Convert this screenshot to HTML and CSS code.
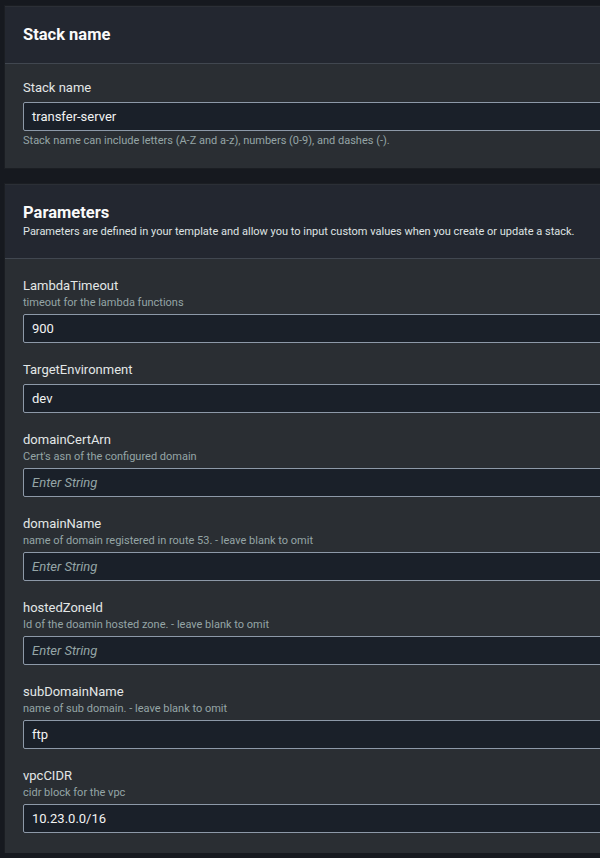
FILE: index.html
```html
<!DOCTYPE html>
<html lang="en">
<head>
<meta charset="utf-8">
<title>Specify stack details</title>
<link rel="stylesheet" href="styles.css">
</head>
<body>
<main class="page">
  <section class="panel">
    <header class="panel-header">
      <h2 class="panel-title">Stack name</h2>
    </header>
    <div class="panel-body panel-body--stack">
      <div class="field">
        <label class="field-label">Stack name</label>
        <div class="input"><span class="input-value">transfer-server</span></div>
        <p class="field-hint">Stack name can include letters (A-Z and a-z), numbers (0-9), and dashes (-).</p>
      </div>
    </div>
  </section>

  <section class="panel">
    <header class="panel-header">
      <h2 class="panel-title">Parameters</h2>
      <p class="panel-desc">Parameters are defined in your template and allow you to input custom values when you create or update a stack.</p>
    </header>
    <div class="panel-body panel-body--params">
      <div class="field">
        <label class="field-label">LambdaTimeout</label>
        <p class="field-desc">timeout for the lambda functions</p>
        <div class="input"><span class="input-value">900</span></div>
      </div>
      <div class="field">
        <label class="field-label">TargetEnvironment</label>
        <div class="input"><span class="input-value">dev</span></div>
      </div>
      <div class="field">
        <label class="field-label">domainCertArn</label>
        <p class="field-desc">Cert's asn of the configured domain</p>
        <div class="input"><span class="input-placeholder">Enter String</span></div>
      </div>
      <div class="field">
        <label class="field-label">domainName</label>
        <p class="field-desc">name of domain registered in route 53. - leave blank to omit</p>
        <div class="input"><span class="input-placeholder">Enter String</span></div>
      </div>
      <div class="field">
        <label class="field-label">hostedZoneId</label>
        <p class="field-desc">Id of the doamin hosted zone. - leave blank to omit</p>
        <div class="input"><span class="input-placeholder">Enter String</span></div>
      </div>
      <div class="field">
        <label class="field-label">subDomainName</label>
        <p class="field-desc">name of sub domain. - leave blank to omit</p>
        <div class="input"><span class="input-value">ftp</span></div>
      </div>
      <div class="field">
        <label class="field-label">vpcCIDR</label>
        <p class="field-desc">cidr block for the vpc</p>
        <div class="input"><span class="input-value">10.23.0.0/16</span></div>
      </div>
    </div>
  </section>
</main>
</body>
</html>
```

FILE: styles.css
```css
html, body {
  margin: 0;
  padding: 0;
  background: #16191f;
  overflow: hidden;
}

body {
  font-family: Roboto, "Liberation Sans", sans-serif;
  color: #d5dbdb;
}

.page {
  display: flex;
  flex-direction: column;
  gap: 16px;
  padding: 6px 0 0 5px;
  width: 620px;
}

.panel {
  background: #2a2e33;
  box-shadow: 0 0 0 1px #1b1e23;
}

.panel-header {
  background: #232730;
  border-top: 1px solid #2b2f36;
  border-bottom: 1px solid #414750;
  padding: 17px 18px 18px;
}

.panel-title {
  margin: 0;
  font-size: 16.5px;
  line-height: 21px;
  font-weight: 700;
  color: #fafafa;
}

.panel-desc {
  margin: 1px 0 0;
  font-size: 11px;
  line-height: 16px;
  color: #dfe3e3;
  white-space: nowrap;
}

.panel-body {
  display: flex;
  flex-direction: column;
  gap: 17px;
  padding: 0 18px;
}

.panel-body--stack {
  padding-top: 14px;
  padding-bottom: 20px;
}

.panel-body--params {
  padding-top: 17px;
  padding-bottom: 20px;
}

.field {
  display: flex;
  flex-direction: column;
}

.field-label {
  font-size: 13px;
  line-height: 20px;
  color: #e3e7e7;
}

.field-desc {
  margin: 0;
  font-size: 11px;
  line-height: 14px;
  color: #95a5a6;
}

.field-hint {
  margin: 3px 0 0;
  font-size: 11px;
  line-height: 14px;
  color: #95a5a6;
}

.input {
  margin-top: 4px;
  height: 29px;
  box-sizing: border-box;
  border: 1px solid #8d99a8;
  border-radius: 2px;
  background: #1a2029;
  display: flex;
  align-items: center;
  padding: 0 8px;
  font-size: 13px;
}

.input-value {
  color: #f2f3f3;
}

.input-placeholder {
  color: #95a5a6;
  font-style: italic;
}
```
